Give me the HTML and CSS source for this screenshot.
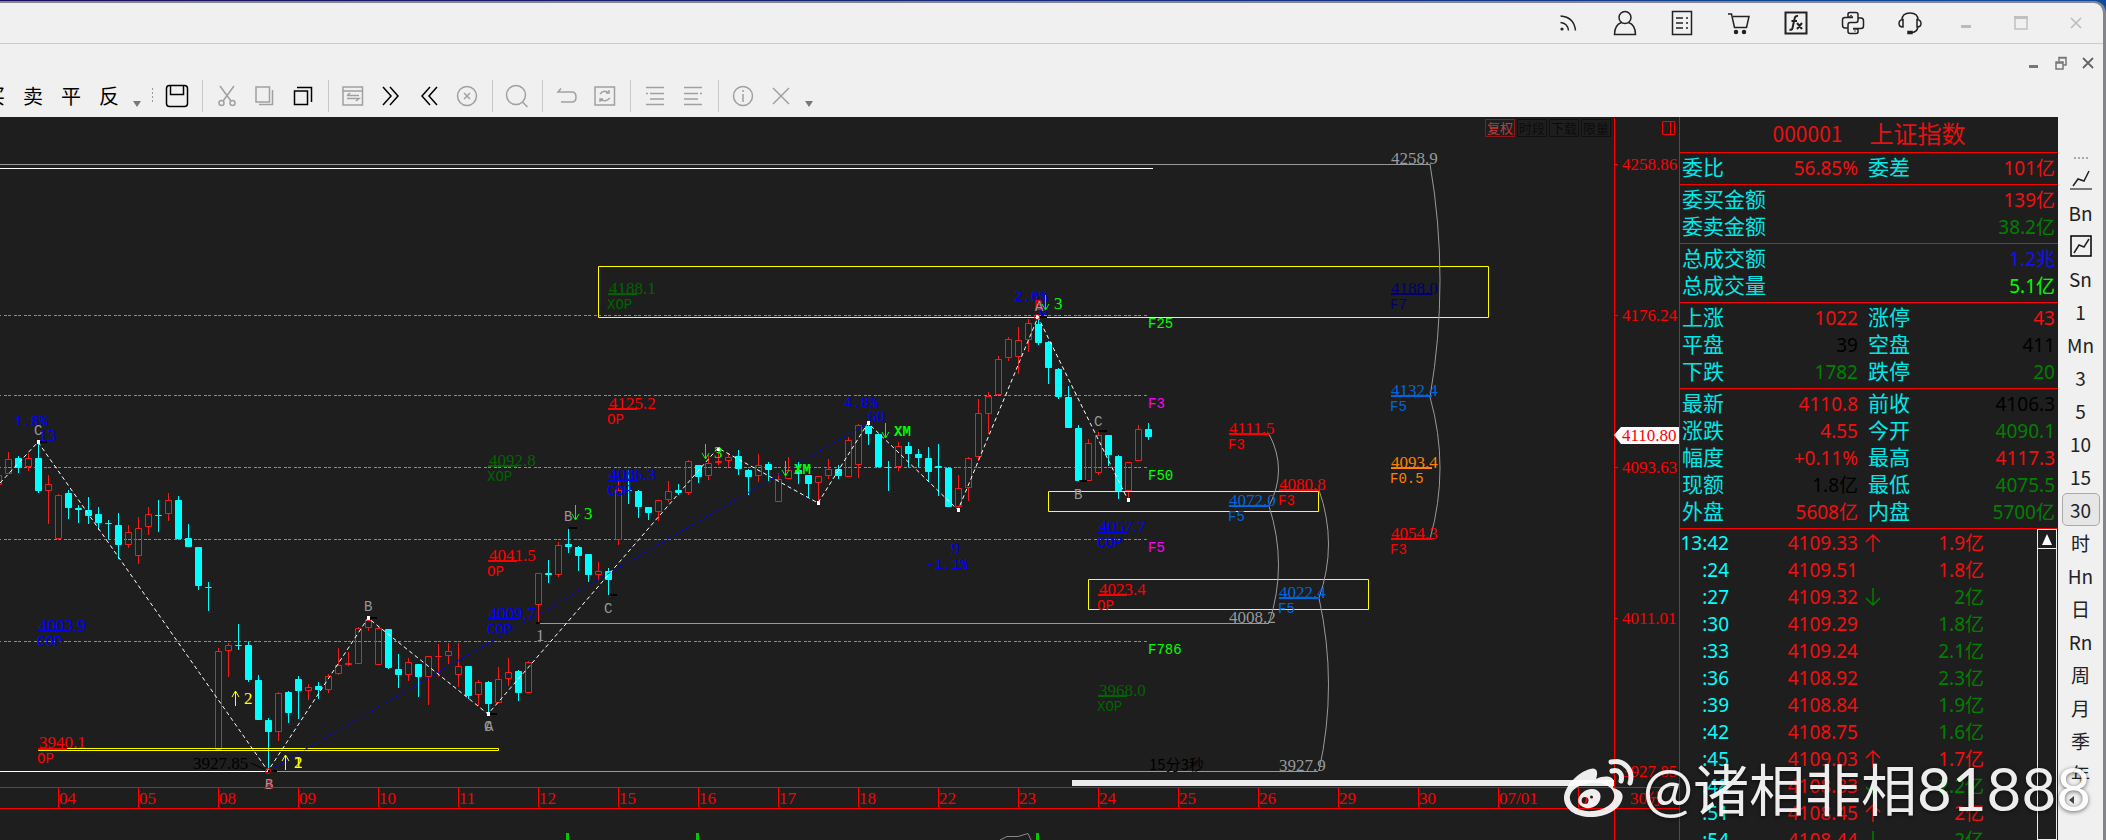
FILE: index.html
```html
<!DOCTYPE html>
<html lang="zh-CN">
<head>
<meta charset="utf-8">
<title>000001 上证指数</title>
<link rel="stylesheet" href="styles.css">
</head>
<body>
<div class="window">
  <header class="titlebar">
    <button class="tb" aria-label="订阅"><svg width="18" height="18" viewBox="0 0 18 18" class="ic dark"><circle cx="3" cy="15" r="1.6" fill="#222" stroke="none"/><path d="M1.500 8.500Q8.500 9 9.500 16.500M1.500 2Q15 3 16.500 16.500"/></svg></button>
    <button class="tb" aria-label="用户"><svg width="24" height="26" viewBox="0 0 24 26" class="ic dark"><circle cx="12" cy="7.500" r="6"/><path d="M8.500 12.500Q1.500 15 1.500 24.500H22.500Q22.500 15 15.500 12.500"/></svg></button>
    <button class="tb" aria-label="文档"><svg width="22" height="26" viewBox="0 0 22 26" class="ic dark"><rect x="1.500" y="1.500" width="19" height="23"/><path d="M5 8H12M5 13H12M5 18H12M15 8H17M15 13H17M15 18H17"/></svg></button>
    <button class="tb" aria-label="购物车"><svg width="24" height="24" viewBox="0 0 24 24" class="ic dark"><path d="M1 3H4.500L7.500 16.500H19.500L22 5.500H6"/><circle cx="9" cy="21" r="1.500" fill="#222"/><circle cx="17" cy="21" r="1.500" fill="#222"/></svg></button>
    <button class="tb" aria-label="函数"><svg width="24" height="24" viewBox="0 0 24 24" class="ic dark"><rect x="1.500" y="1.500" width="21" height="21" stroke-width="2"/><path stroke-width="2" d="M14 5Q11 4.500 10.500 8L8.500 17Q8 19.500 5.500 18.500M7.500 10H13M13 12L18 18M18 12L13 18"/></svg></button>
    <button class="tb" aria-label="Python"><svg width="24" height="24" viewBox="0 0 24 24" class="ic dark"><path d="M12 6H7V3Q7 1.500 9 1.500H15Q17 1.500 17 3.500V9Q17 11.500 15 11.500H9Q7 11.500 7 14V17H4Q1.500 17 1.500 14V9Q1.500 6.500 4 6.500H12M12 18H17V21Q17 22.500 15 22.500H9Q7 22.500 7 20.500V17M17 7H20Q22.500 7 22.500 10V15Q22.500 17.500 20 17.500H12M10 4V5M14 19.500V20.500"/></svg></button>
    <button class="tb" aria-label="客服"><svg width="24" height="24" viewBox="0 0 24 24" class="ic dark"><path d="M4 9Q4 2 12 2T20 9M5 8.500V16Q1 16 1 12.500T5 8.500ZM19 8.500V16Q23 16 23 12.500T19 8.500ZM20 16Q19 21 14 21.500"/><rect x="10" y="20.500" width="4" height="2" fill="#222"/></svg></button>
    <button class="tb win" aria-label="最小化"><svg width="14" height="14" viewBox="0 0 14 14"><rect x="2" y="9" width="10" height="3" fill="#bbb"/></svg></button>
    <button class="tb win" aria-label="最大化"><svg width="14" height="14" viewBox="0 0 14 14"><path d="M1 1.500H13V13H1Z" fill="none" stroke="#c0c0c0" stroke-width="1.500"/><path d="M0 1.500H14" stroke="#c0c0c0" stroke-width="3"/></svg></button>
    <button class="tb win" aria-label="关闭"><svg width="14" height="14" viewBox="0 0 14 14"><path d="M2 2L12 12M12 2L2 12" stroke="#bbb" stroke-width="1.500"/></svg></button>
  </header>
  <div class="mdi">
    <button aria-label="最小化子窗口"><svg width="12" height="14" viewBox="0 0 12 14"><rect x="1" y="9" width="9" height="3" fill="#777"/></svg></button>
    <button aria-label="还原子窗口"><svg width="12" height="14" viewBox="0 0 12 14" fill="none" stroke="#777" stroke-width="1.500"><path d="M4 5V1.500H11V9H8M1 6H8V13H1ZM1 7H8M4 2H11"/></svg></button>
    <button aria-label="关闭子窗口"><svg width="12" height="14" viewBox="0 0 12 14"><path d="M1 2L11 12M11 2L1 12" stroke="#666" stroke-width="1.800"/></svg></button>
  </div>
  <nav class="toolbar">
    <button class="tool">买</button><button class="tool">卖</button><button class="tool">平</button><button class="tool">反</button>
    <button class="drop" aria-label="更多交易"><svg width="8" height="6" viewBox="0 0 8 6"><path d="M0 0H8L4 6Z" fill="#777"/></svg></button>
    <span class="grip"></span>
    <button class="tool" aria-label="保存"><svg width="24" height="24" viewBox="0 0 24 24" class="ic black"><rect x="1.500" y="1.500" width="21" height="21" rx="3"/><path d="M5.500 2V10.500H18.500V2"/></svg></button>
    <span class="sep"></span>
    <button class="tool" aria-label="剪切"><svg width="18" height="22" viewBox="0 0 18 22" class="ic grey"><path d="M2 1L13 16M16 1L5 16"/><circle cx="3.500" cy="18" r="2.500"/><circle cx="14.500" cy="18" r="2.500"/></svg></button>
    <button class="tool" aria-label="复制"><svg width="20" height="20" viewBox="0 0 20 20" class="ic grey"><path d="M1 1H14.500V16H1ZM17.500 4V18.500H4"/></svg></button>
    <button class="tool" aria-label="粘贴"><svg width="20" height="20" viewBox="0 0 20 20" class="ic black"><path d="M1.500 5H14.500V18.500H1.500ZM4 1.500H18.500V16"/></svg></button>
    <span class="sep"></span>
    <button class="tool" aria-label="切换"><svg width="22" height="20" viewBox="0 0 22 20" class="ic grey"><path d="M1 1H20.500V19H1ZM1 5H20M5 9.500H17M5 9.500L8 7M5 12.500H17L14 15"/></svg></button>
    <button class="tool" aria-label="前进"><svg width="18" height="20" viewBox="0 0 18 20" class="ic black"><path d="M1 1L9 10L1 19M8 1L16 10L8 19"/></svg></button>
    <button class="tool" aria-label="后退"><svg width="18" height="20" viewBox="0 0 18 20" class="ic black"><path d="M17 1L9 10L17 19M10 1L2 10L10 19"/></svg></button>
    <button class="tool" aria-label="停止"><svg width="22" height="22" viewBox="0 0 22 22" class="ic grey"><circle cx="11" cy="11" r="9.500"/><path d="M8 8L14 14M14 8L8 14"/></svg></button>
    <span class="sep"></span>
    <button class="tool" aria-label="查找"><svg width="24" height="24" viewBox="0 0 24 24" class="ic grey"><circle cx="11" cy="11" r="9.500"/><path d="M17.500 18L22.500 23"/></svg></button>
    <span class="sep"></span>
    <button class="tool" aria-label="撤销"><svg width="22" height="18" viewBox="0 0 22 18" class="ic grey"><path d="M5 1.500L2 5H16Q20 5 20 10T16 15H5"/></svg></button>
    <button class="tool" aria-label="刷新"><svg width="22" height="20" viewBox="0 0 22 20" class="ic grey"><path d="M1 1H20.500V19H1ZM6 8Q10 3 15 7M15 4V7H12M16 12Q11 17 6 13M6 16V13H9"/></svg></button>
    <span class="sep"></span>
    <button class="tool" aria-label="减少缩进"><svg width="20" height="20" viewBox="0 0 20 20" class="ic grey"><path d="M1 1.500H19M5 7.500H19M5 13H19M1 18.500H19M1 7.500H3"/></svg></button>
    <button class="tool" aria-label="增加缩进"><svg width="20" height="20" viewBox="0 0 20 20" class="ic grey"><path d="M1 1.500H19M1 7.500H15M1 13H15M1 18.500H19M17 7.500H19"/></svg></button>
    <span class="sep"></span>
    <button class="tool" aria-label="信息"><svg width="22" height="22" viewBox="0 0 22 22" class="ic grey"><circle cx="11" cy="11" r="9.500"/><path d="M11 9V17M11 5V7"/></svg></button>
    <button class="tool" aria-label="清除"><svg width="18" height="18" viewBox="0 0 18 18" class="ic grey"><path d="M1 1L17 17M17 1L1 17"/></svg></button>
    <button class="drop" aria-label="更多工具"><svg width="8" height="6" viewBox="0 0 8 6"><path d="M0 0H8L4 6Z" fill="#777"/></svg></button>
  </nav>

  <main class="main">
    <section class="chart">
      <div class="tags"><button class="on">复权</button><button>时段</button><button>下载</button><button>限量</button></div>
      <svg class="plot" viewBox="0 117 1679 723" preserveAspectRatio="xMinYMin slice" role="img" aria-label="上证指数 30分钟K线">
        <g class="dash"><path d="M-6 315.500H1147M-6 395.500H1147M-6 467.500H1147M-6 539.500H1147M-6 641.500H1147"/></g>
        <g class="line grey-l"><path d="M0 164.500H1430M268 771.500H1318M538 623.500H1269"/></g>
        <g class="line white-l"><path d="M0 168.500H1153M0 771.500H268"/></g>

        <g id="candles"></g>

        <g class="line yellow-l"><path d="M38.500 748.500H498.500V750.500H38.500ZM598.500 266.500H1488.500V317.500H598.500ZM1048.500 491.500H1318.500V511.500H1048.500ZM1088.500 579.500H1368.500V609.500H1088.500Z"/></g>
        <path class="zig" d="M0 483L38 442L268 771L368 618L488 714L718 448L818 503L868 423L958 510L1038 317L1128 500"/>
        <path class="zig blue-l" d="M268 771L868 423"/>
        <path fill="#fff" d="M37 440h3v4h-3zM367 616h3v4h-3zM487 712h3v4h-3zM717 447h3v4h-3zM817 501h3v4h-3zM867 421h3v4h-3zM957 508h3v4h-3zM1036 315h3v4h-3zM1127 498h3v4h-3z"/>
        <path d="M40 441h7v2h-7zM370 617h7v2h-7zM490 713h7v2h-7zM569 527h8v2h-8zM536 622h4v2h-4zM609 594h8v2h-8zM1040 316h7v2h-7zM1099 430h8v2h-8zM1079 480h8v2h-8zM268 770h9v2h-9z"/>
        <path d="M251 763L266 770" stroke="#000"/>
        <g fill="none" stroke="#f00"><circle cx="268" cy="771" r="2.500"/><circle cx="1037" cy="317" r="2.500"/></g>

        <g class="line grey-l"><path d="M1269 434Q1288 470 1269 506Q1288 565 1269 623M1319 490Q1338 544 1319 598Q1338 685 1319 771M1430 164Q1450 280 1430 397Q1450 468 1430 539"/></g>

        <path fill="#00f" d="M38 630h29v2H38zM488 618h29v2h-29zM608 479h29v2h-29zM1098 531h29v2h-29z"/>
        <path fill="#f00" d="M38 748h29v2H38zM488 560h29v2h-29zM608 408h29v2h-29zM1098 594h29v2h-29zM1229 433h41v2h-41zM1279 489h41v2h-41zM1391 538h41v2h-41z"/>
        <path fill="#006400" d="M488 465h29v2h-29zM608 293h29v2h-29zM1098 695h29v2h-29z"/>
        <path fill="#06d" d="M1229 505h41v2h-41zM1279 597h41v2h-41zM1391 395h41v2h-41z"/>
        <path fill="#00006e" d="M1391 293h41v2h-41z"/><path fill="#ff8000" d="M1391 467h41v2h-41z"/>

        <g class="n blue"><text x="39" y="631">4003.9</text><text x="489" y="619">4009.7</text><text x="609" y="480">4086.3</text><text x="1099" y="532">4057.7</text><text x="39" y="441">13</text><text x="868" y="422">60</text><text x="951" y="554">9</text><text x="1039" y="315">8</text></g>
        <g class="m blue"><text x="37" y="646">COP</text><text x="487" y="634">COP</text><text x="607" y="495">COP</text><text x="1097" y="547">COP</text><text x="14" y="426">1.8%</text><text x="844" y="407">4.8%</text><text x="1014" y="301">2.6%</text><text x="926" y="569">-1.1%</text></g>
        <g class="n red"><text x="39" y="748">3940.1</text><text x="489" y="561">4041.5</text><text x="609" y="409">4125.2</text><text x="1099" y="595">4023.4</text><text x="1229" y="434">4111.5</text><text x="1279" y="490">4080.8</text><text x="1391" y="539">4054.3</text></g>
        <g class="m red"><text x="37" y="763">OP</text><text x="487" y="576">OP</text><text x="607" y="424">OP</text><text x="1097" y="610">OP</text><text x="1228" y="449">F3</text><text x="1278" y="505">F3</text><text x="1390" y="554">F3</text><text x="264" y="789">A</text><text x="1034" y="310">B</text></g>
        <g class="n green"><text x="489" y="466">4092.8</text><text x="609" y="294">4188.1</text><text x="1099" y="696">3968.0</text></g>
        <g class="m green"><text x="487" y="481">XOP</text><text x="607" y="309">XOP</text><text x="1097" y="711">XOP</text></g>
        <g class="n azure"><text x="1229" y="506">4072.0</text><text x="1279" y="598">4022.4</text><text x="1391" y="396">4132.4</text></g>
        <g class="m azure"><text x="1228" y="521">F5</text><text x="1278" y="613">F5</text><text x="1390" y="411">F5</text></g>
        <g class="navy"><text class="n" x="1391" y="294">4188.0</text><text class="m" x="1390" y="309">F7</text></g>
        <g class="orange"><text class="n" x="1391" y="468">4093.4</text><text class="m" x="1390" y="483">F0.5</text></g>
        <g class="n grey-t"><text x="1391" y="164">4258.9</text><text x="1229" y="623">4008.2</text><text x="1279" y="771">3927.9</text><text x="536" y="641">1</text></g>
        <g class="m grey-t"><text x="34" y="435">C</text><text x="364" y="611">B</text><text x="265" y="789">B</text><text x="485" y="731">A</text><text x="484" y="731">C</text><text x="564" y="521">B</text><text x="604" y="613">C</text><text x="1035" y="311">A</text><text x="1094" y="426">C</text><text x="1074" y="499">B</text></g>
        <g class="m lime"><text x="1148" y="328">F25</text><text x="1148" y="480">F50</text><text x="1148" y="654">F786</text><text class="bold" x="794" y="474">XM</text><text class="bold" x="894" y="436">XM</text></g>
        <g class="m magenta"><text x="1148" y="408">F3</text><text x="1148" y="552">F5</text></g>
        <g class="n lime"><text x="584" y="519">3</text><text x="714" y="458">3</text><text x="1054" y="309">3</text></g>
        <g class="n yellow"><text x="244" y="704">2</text><text x="294" y="768">2</text><text x="294" y="768">1</text></g>
        <g class="n"><text x="193" y="769">3927.85</text><text class="cjk" x="1149" y="770">15分3秒</text></g>

        <path class="arrow lime-l" d="M575.500 505V519M572 514L575.500 520L579 514M705.500 444V458M702 453L705.500 459L709 453M785.500 461V475M782 470L785.500 476L789 470M885.500 423V437M882 432L885.500 438L889 432M1045.500 295V309M1042 304L1045.500 310L1049 304"/>
        <path class="arrow yellow-l" d="M235.500 706V691M232 697L235.500 691L239 697M285.500 770V755M282 761L285.500 755L289 761"/>

        <rect x="1072" y="780" width="542" height="6" fill="#ebebeb"/>
        <g class="line red-l">
          <path d="M0 787.500H1679M0 808.500H1679"/>
          <path d="M1614.500 118V840M1614 164.500H1618M1614 315.500H1618M1614 467.500H1618M1614 618.500H1618M1662.500 121.500H1674.500V134.500H1662.500ZM1670.500 121V135"/>
          <path d="M58.500 787V807M138.500 787V807M218.500 787V807M298.500 787V807M378.500 787V807M458.500 787V807M538.500 787V807M618.500 787V807M698.500 787V807M778.500 787V807M858.500 787V807M938.500 787V807M1018.500 787V807M1098.500 787V807M1178.500 787V807M1258.500 787V807M1338.500 787V807M1418.500 787V807M1498.500 787V807M1578.500 787V807"/>
        </g>
        <g class="n red"><text x="59" y="804">04</text><text x="139" y="804">05</text><text x="219" y="804">08</text><text x="299" y="804">09</text><text x="379" y="804">10</text><text x="459" y="804">11</text><text x="539" y="804">12</text><text x="619" y="804">15</text><text x="699" y="804">16</text><text x="779" y="804">17</text><text x="859" y="804">18</text><text x="939" y="804">22</text><text x="1019" y="804">23</text><text x="1099" y="804">24</text><text x="1179" y="804">25</text><text x="1259" y="804">26</text><text x="1339" y="804">29</text><text x="1419" y="804">30</text><text x="1499" y="804">07/01</text><text x="1579" y="804">02</text><text x="1630" y="804">30<tspan class="cjk">分</tspan></text>
          <text x="1622" y="170">4258.86</text><text x="1622" y="321">4176.24</text><text x="1622" y="473">4093.63</text><text x="1622" y="624">4011.01</text><text x="1622" y="777">3927.85</text></g>
        <path d="M1614 435L1621 427H1679V444H1621Z" fill="#fff"/>
        <text class="n red" x="1622" y="441">4110.80</text>

        <path fill="#00c800" d="M566 833h3v7h-3zM696 833h3v7h-3zM1036 833h3v7h-3z"/>
        <path d="M1000 840L1007 836.500H1018L1028 833.500L1031 840" fill="none" stroke="#888"/>
      </svg>
    </section>

    <aside class="quote">
      <h1 class="name"><span class="code">000001</span><span>上证指数</span></h1>
      <table class="sec"><colgroup><col class="c1"><col class="c2"><col class="c3"><col></colgroup>
        <tr><th>委比</th><td class="r">56.85%</td><th>委差</th><td class="r">101亿</td></tr></table>
      <table class="sec"><tr><th>委买金额</th><td class="r">139亿</td></tr><tr><th>委卖金额</th><td class="g">38.2亿</td></tr></table>
      <table class="sec"><tr><th>总成交额</th><td class="b">1.2兆</td></tr><tr><th>总成交量</th><td class="l">5.1亿</td></tr></table>
      <table class="sec"><colgroup><col class="c1"><col class="c2"><col class="c3"><col></colgroup>
        <tr><th>上涨</th><td class="r">1022</td><th>涨停</th><td class="r">43</td></tr>
        <tr><th>平盘</th><td class="k">39</td><th>空盘</th><td class="k">411</td></tr>
        <tr><th>下跌</th><td class="g">1782</td><th>跌停</th><td class="g">20</td></tr></table>
      <table class="sec"><colgroup><col class="c1"><col class="c2"><col class="c3"><col></colgroup>
        <tr><th>最新</th><td class="r">4110.8</td><th>前收</th><td class="k">4106.3</td></tr>
        <tr><th>涨跌</th><td class="r">4.55</td><th>今开</th><td class="g">4090.1</td></tr>
        <tr><th>幅度</th><td class="r">+0.11%</td><th>最高</th><td class="r">4117.3</td></tr>
        <tr><th>现额</th><td class="k">1.8亿</td><th>最低</th><td class="g">4075.5</td></tr>
        <tr><th>外盘</th><td class="r">5608亿</td><th>内盘</th><td class="g">5700亿</td></tr></table>
      <div class="ticks">
        <table class="deals"><colgroup><col class="t1"><col class="t2"><col class="t3"><col></colgroup>
          <tr><th>13:42</th><td class="r">4109.33</td><td class="r dir"><svg width="16" height="18" viewBox="0 0 16 18"><path d="M8 18V1M1 8L8 1L15 8"/></svg></td><td class="r">1.9亿</td></tr>
          <tr><th>:24</th><td class="r">4109.51</td><td></td><td class="r">1.8亿</td></tr>
          <tr><th>:27</th><td class="r">4109.32</td><td class="g dir"><svg width="16" height="18" viewBox="0 0 16 18"><path d="M8 0V17M1 10L8 17L15 10"/></svg></td><td class="g">2亿</td></tr>
          <tr><th>:30</th><td class="r">4109.29</td><td></td><td class="g">1.8亿</td></tr>
          <tr><th>:33</th><td class="r">4109.24</td><td></td><td class="g">2.1亿</td></tr>
          <tr><th>:36</th><td class="r">4108.92</td><td></td><td class="g">2.3亿</td></tr>
          <tr><th>:39</th><td class="r">4108.84</td><td></td><td class="g">1.9亿</td></tr>
          <tr><th>:42</th><td class="r">4108.75</td><td></td><td class="g">1.6亿</td></tr>
          <tr><th>:45</th><td class="r">4109.03</td><td class="r dir"><svg width="16" height="18" viewBox="0 0 16 18"><path d="M8 18V1M1 8L8 1L15 8"/></svg></td><td class="r">1.7亿</td></tr>
          <tr><th>:48</th><td class="r">4108.33</td><td class="g dir"><svg width="16" height="18" viewBox="0 0 16 18"><path d="M8 0V17M1 10L8 17L15 10"/></svg></td><td class="g">2.2亿</td></tr>
          <tr><th>:51</th><td class="r">4108.45</td><td class="r dir"><svg width="16" height="18" viewBox="0 0 16 18"><path d="M8 18V1M1 8L8 1L15 8"/></svg></td><td class="r">2亿</td></tr>
          <tr><th>:54</th><td class="r">4108.44</td><td class="g dir"><svg width="16" height="18" viewBox="0 0 16 18"><path d="M8 0V17M1 10L8 17L15 10"/></svg></td><td class="g">2亿</td></tr>
        </table>
        <div class="scroll"><button aria-label="向上滚动"><svg width="10" height="11" viewBox="0 0 10 11"><path d="M5 0L10 11H0Z" fill="#fff"/></svg></button></div>
      </div>
    </aside>

    <nav class="periods">
      <span class="dots"></span>
      <button aria-label="分时"><svg width="22" height="20" viewBox="0 0 22 20" class="ic dark"><path d="M3 16L8 9L14 11L19 1"/><path d="M0 19H22" stroke="#777" stroke-width="2"/></svg></button>
      <button>Bn</button>
      <button aria-label="走势"><svg width="22" height="22" viewBox="0 0 22 22" class="ic dark"><rect x="1" y="1" width="20" height="20" stroke="#000"/><path d="M4 18L9 10L14 12L19 4"/></svg></button>
      <button>Sn</button><button>1</button><button>Mn</button><button>3</button><button>5</button><button>10</button><button>15</button><button class="sel">30</button><button>时</button><button>Hn</button><button>日</button><button>Rn</button><button>周</button><button>月</button><button>季</button><button>年</button>
      <button class="more" aria-label="收起"><svg width="5" height="8" viewBox="0 0 5 8"><path d="M5 0V8L0 4Z" fill="#444"/></svg></button>
    </nav>
  </main>
</div>

<div class="mark">
  <svg width="72" height="60" viewBox="0 0 72 60">
    <path fill="#fff" fill-rule="evenodd" d="M27 11C33 9 36 13 33 21C42 17 50 18 51 24Q51 27 50 30C58 32 61 36 59 42C56 52 43 59 28 59C12 59 1 51 1 40C1 29 15 14 27 11ZM29 25C15 26 6 33 7 41C8 49 18 54 30 53C43 52 53 44 51 36C50 29 40 24 29 25Z"/>
    <path fill="#fff" fill-rule="evenodd" d="M28 31C36 30 40 37 36 44C32 51 22 52 17 47C12 41 19 32 28 31ZM22 39A3.500 3.500 0 1 0 22 46A3.500 3.500 0 1 0 22 39ZM28.500 37.500A1.500 1.500 0 1 0 28.500 40.500A1.500 1.500 0 1 0 28.500 37.500Z"/>
    <path fill="none" stroke="#fff" stroke-width="5" stroke-linecap="round" d="M48 4C61 1 71 12 67 25M49 13C56 11 60 16 58 23"/>
  </svg>
  <span><b>@</b>诸相非相<b>81888</b></span>
</div>
<script src="candles.js"></script>
</body>
</html>
```

FILE: styles.css
```css
* { box-sizing: border-box; }
html, body { height: 100%; margin: 0; }
body {
  position: relative;
  overflow: hidden;
  background: linear-gradient(90deg, #1a0a5c, #0e4ca0);
  font-family: "Noto Sans", "Noto Sans CJK SC", sans-serif;
}
button {
  display: flex;
  align-items: center;
  justify-content: center;
  padding: 0;
  border: 0;
  background: none;
  font: inherit;
  color: inherit;
}
.window {
  display: flex;
  flex-direction: column;
  height: calc(100% - 1px);
  margin-top: 1px;
  border-top: 2px solid #85858f;
  border-right: 3px solid #7f8690;
  border-top-right-radius: 12px;
  background: #f0f0f0;
  overflow: hidden;
}
.ic { fill: none; stroke-width: 1.5; }
.dark { stroke: #222; }
.black { stroke: #000; }
.grey { stroke: #a0a0a0; }

.titlebar {
  display: flex;
  flex: none;
  justify-content: flex-end;
  height: 41px;
  border-bottom: 1px solid #ccc;
}
.tb { width: 57px; }
.tb.win { width: 55px; }
.mdi {
  display: flex;
  flex: none;
  justify-content: flex-end;
  height: 36px;
  padding: 2px 2px 0 0;
}
.mdi button { width: 27px; }
.toolbar {
  display: flex;
  flex: none;
  align-items: stretch;
  height: 37px;
  margin-left: -24px;
  padding-bottom: 5px;
  font: 20px/32px "Noto Sans CJK SC", sans-serif;
  color: #000;
}
.tool { flex: none; width: 38px; }
.drop { width: 18px; padding-top: 16px; }
.grip { width: 12px; margin: 8px 0; background: repeating-linear-gradient(#999 0 2px, transparent 2px 4px) center / 1px 100% no-repeat; }
.sep { width: 1px; margin: 0 5px 0 6px; background: #c8c8c8; }

.main { display: flex; flex: 1; min-height: 0; }
.chart { position: relative; flex: 1; min-width: 0; overflow: hidden; background: #1e1e1e; }
.plot { display: block; width: 100%; height: 100%; }
.tags { position: absolute; top: 2px; right: 68px; display: flex; gap: 2px; }
.tags button {
  width: 30px;
  height: 18px;
  border: 1px solid #101010;
  font: 13px/16px "Noto Sans CJK SC", sans-serif;
  color: #0c0c0c;
}
.tags .on { border-color: #8c1818; color: #c03a3a; }

.line { fill: none; stroke-width: 1; }
.dash { stroke: #8a8a8a; stroke-dasharray: 3 1 3 3; }
.grey-l { stroke: #999; }
.white-l { stroke: #fff; }
.yellow-l { stroke: #ff0; }
.red-l { stroke: #f00; }
.zig { fill: none; stroke: #fff; stroke-dasharray: 4 3; }
.blue-l { stroke: #00f; }
.arrow { fill: none; }
.lime-l { stroke: #0f0; }
.up { stroke: #f01c1c; fill: none; }
.down { stroke: #0ff; fill: #0ff; }
.n { font: 17px "Liberation Serif", serif; }
.m { font: 14px "Liberation Mono", monospace; }
.cjk { font: 15px "Noto Sans CJK SC", sans-serif; }
.bold { font-weight: bold; }
.red { fill: #f00; }
.blue { fill: #00f; }
.green { fill: #006400; }
.azure { fill: #06d; }
.navy { fill: #00006e; }
.orange { fill: #ff8000; }
.grey-t { fill: #999; }
.lime { fill: #0f0; }
.magenta { fill: #f0f; }
.yellow { fill: #ff0; }

.quote {
  display: flex;
  flex: none;
  flex-direction: column;
  width: 379px;
  border-left: 1px solid #f00;
  background: #1e1e1e;
  font-size: 19px;
  line-height: 27px;
}
.name {
  display: flex;
  flex: none;
  justify-content: center;
  gap: 27px;
  height: 36px;
  margin: 0;
  border-bottom: 1px solid #f00;
  font: 24px/32px "Noto Sans CJK SC", sans-serif;
  color: #e81010;
}
.code { font-size: 21px; }
.sec, .deals { border-spacing: 0; table-layout: fixed; width: 100%; }
.sec { flex: none; padding: 1px 0 3px; border-bottom: 1px solid #f00; }
.quote tr { height: 27px; }
.quote th, .quote td { height: 27px; padding: 0; line-height: 26px; white-space: nowrap; }
.quote th { font-weight: normal; color: #00e8e8; }
.quote td { text-align: right; }
.quote .sec th { padding-left: 2px; line-height: 24px; vertical-align: top; text-align: left; font-family: "Noto Sans CJK SC", sans-serif; font-size: 21px; }
.quote .sec td:last-child { padding-right: 3px; }
.c1 { width: 68px; }
.c2 { width: 110px; }
.c3 { width: 76px; }
.quote .sec td + th { padding-left: 10px; }
.r { color: #f01010; stroke: #f01010; }
.g { color: #008000; stroke: #008000; }
.b { color: #1010ff; }
.l { color: #0f0; }
.k { color: #000; }
.ticks { display: flex; flex: 1; min-height: 0; overflow: hidden; }
.deals { flex: none; width: 304px; height: 324px; }
.quote .deals th { text-align: right; color: #0ff; }
.t1 { width: 49px; }
.t2 { width: 129px; }
.t3 { width: 30px; }
.dir svg { display: block; margin: 0 7px 0 auto; fill: none; stroke-width: 1.5; }
.quote td.dir { vertical-align: middle; }
.scroll { width: 20px; margin: 0 1px 0 auto; border: 1px solid #eee; }
.scroll button { width: 18px; height: 19px; border-bottom: 1px solid #eee; }

.periods {
  display: flex;
  flex: none;
  flex-direction: column;
  align-items: center;
  width: 45px;
  padding-top: 40px;
  overflow: hidden;
  font: 19px/30px "Noto Sans CJK SC", sans-serif;
  color: #222;
}
.periods button { flex: none; width: 38px; height: 33px; }
.dots { flex: none; width: 14px; height: 2px; margin-bottom: 4px; background: repeating-linear-gradient(90deg, #aaa 0 2px, transparent 2px 4px); }
.periods .sel { border: 1px solid #aaa; border-radius: 5px; background: #e6e6e6; }
.periods .more { height: 20px; padding-right: 18px; }

.mark {
  position: absolute;
  right: 15px;
  bottom: 8px;
  display: flex;
  align-items: center;
  gap: 8px;
  color: #fff;
  font: 56px/88px "Noto Sans CJK SC", sans-serif;
  white-space: nowrap;
  opacity: 0.92;
  text-shadow: 0 1px 4px rgba(0, 0, 0, 0.6);
  pointer-events: none;
}
.mark b { font: 60px/88px Lato, sans-serif; }
```

FILE: candles.js
```js
// Each bar: direction (1 up, 0 down), high, body top, body bottom, low. Bars are 10 units apart.
const bars = [
  [1,475,475,485,485],[1,452,459,474,474],[0,456,458,468,473],[1,453,458,467,471],[0,443,458,491,493],
  [1,475,484,491,524],[1,494,495,539,540],[0,490,493,508,519],[0,505,508,510,523],[0,497,510,516,524],
  [0,507,514,523,530],[0,520,523,524,539],[0,513,525,545,559],[1,525,532,545,548],[1,517,528,556,564],
  [1,507,514,527,535],[0,500,515,516,532],[1,493,500,514,521],[0,496,500,539,539],[0,524,538,547,547],
  [0,547,547,586,590],[0,582,587,588,611],[1,648,651,750,750],[1,643,645,651,677],[0,624,645,646,650],
  [0,642,645,680,682],[0,675,680,720,720],[0,718,720,732,770],[1,692,693,732,741],[0,691,692,713,723],
  [0,676,679,691,719],[1,684,687,691,700],[0,682,686,690,699],[1,674,676,690,693],[1,648,665,674,675],
  [1,652,663,665,666],[1,627,628,664,664],[1,617,620,628,631],[1,627,628,665,665],[0,629,629,668,669],
  [0,654,669,675,688],[1,658,662,675,681],[0,664,664,677,697],[1,656,656,677,705],[1,644,656,657,677],
  [1,643,651,656,664],[1,643,666,675,687],[0,666,666,696,699],[1,680,682,695,706],[0,681,682,704,714],
  [1,667,679,703,703],[1,658,672,679,686],[0,670,671,693,701],[1,661,662,693,693],[1,573,573,605,622],
  [0,560,573,575,583],[1,542,545,575,577],[0,529,544,547,553],[0,546,547,556,571],[0,554,554,575,582],
  [1,562,571,575,580],[0,568,571,580,595],[1,481,490,540,545],[0,470,490,491,504],[0,490,491,507,518],
  [0,507,507,513,520],[1,500,500,512,521],[1,481,491,500,502],[0,484,490,493,495],[1,460,461,493,495],
  [0,465,465,477,483],[1,455,463,476,480],[1,450,461,463,465],[1,454,457,461,467],[0,450,456,469,475],
  [0,469,470,477,495],[1,454,465,476,482],[0,462,464,470,481],[1,473,479,502,502],[1,457,470,479,479],
  [0,462,470,474,484],[0,475,475,484,498],[1,476,476,483,502],[1,459,469,476,479],[0,465,469,476,479],
  [1,437,440,477,477],[1,424,425,465,478],[0,425,426,434,445],[0,434,434,467,467],[0,461,467,468,491],
  [1,442,446,467,471],[0,442,446,454,467],[0,449,454,458,467],[0,447,458,472,481],[0,444,466,468,496],
  [0,467,468,507,507],[1,475,488,507,508],[1,457,458,488,501],[1,399,413,457,461],[1,392,396,414,434],
  [1,356,359,395,395],[1,337,339,358,361],[1,327,340,357,374],[1,319,323,340,352],[0,316,324,343,345],
  [0,341,342,368,384],[0,368,369,397,399],[0,386,397,428,428],[0,425,428,481,481],[1,439,443,481,481],
  [1,432,435,473,475],[0,435,435,455,466],[0,455,456,491,499],[1,462,462,491,500],[1,425,429,461,461],
  [0,423,429,437,440]
];
let up = '', down = '';
bars.forEach(([rise, high, top, bottom, low], i) => {
  const x = i * 10 - 1.5;
  const t = top + 0.5;
  const b = Math.max(bottom - 0.5, t);
  const d = `M${x} ${high}V${t}M${x} ${b}V${low}M${x - 3} ${t}H${x + 3}V${b}H${x - 3}Z`;
  if (rise) up += d; else down += d;
});
document.getElementById('candles').innerHTML =
  `<path class="up" d="${up}"/><path class="down" d="${down}"/>`;
```
